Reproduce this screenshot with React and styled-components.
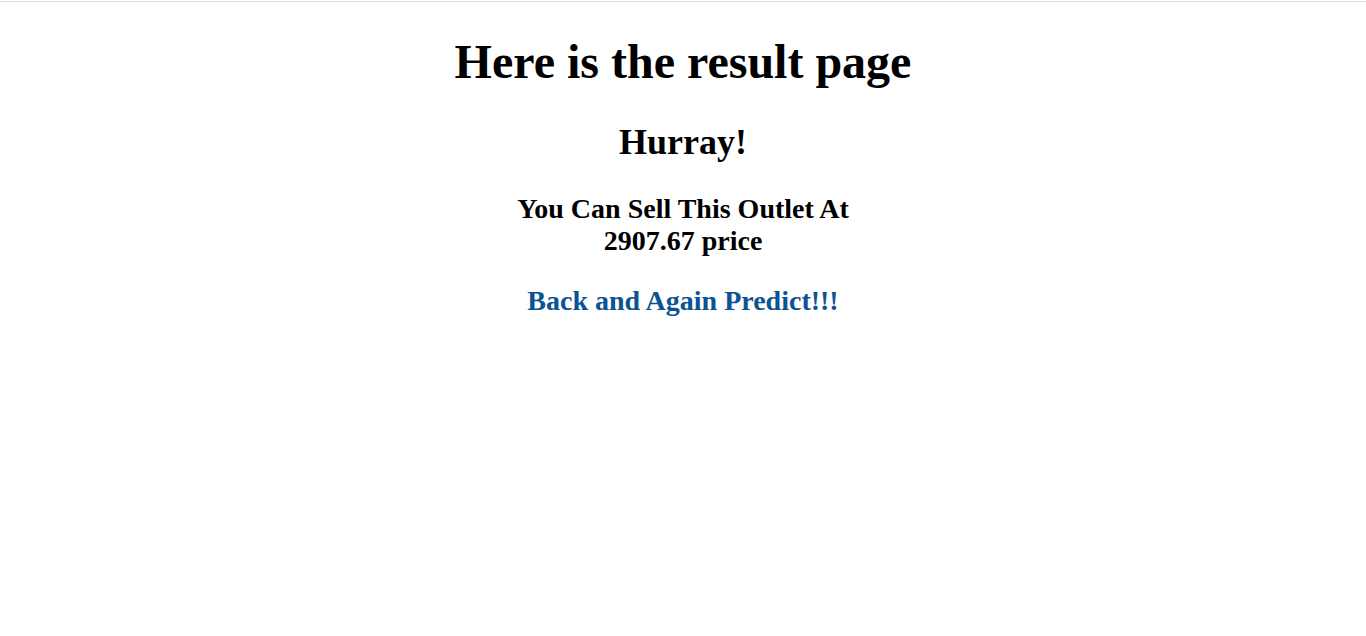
import styled, { createGlobalStyle } from "styled-components";

const GlobalStyle = createGlobalStyle`
  html, body {
    margin: 0;
    background: #fff;
  }
  body {
    font-family: "Liberation Serif", "Times New Roman", serif;
    color: #000;
  }
`;

const Page = styled.div`
  margin-top: 1px;
  border-top: 1px solid #dcdcdc;
  padding: 0 12px;
  text-align: center;
  min-height: 634px;
  box-sizing: border-box;
  display: flow-root;
`;

const Title = styled.h1`
  font-size: 48px;
  font-weight: bold;
  margin: 32px 0;
`;

const Cheer = styled.h2`
  font-size: 36px;
  font-weight: bold;
  margin: 30px 0;
`;

const Result = styled.h3`
  font-size: 28px;
  font-weight: bold;
  margin: 28px 0;
`;

const BackLink = styled.a`
  color: #0b5394;
  text-decoration: none;
`;

const App = () => {
  return (
    <>
      <GlobalStyle />
      <Page>
        <Title>Here is the result page</Title>
        <Cheer>Hurray!</Cheer>
        <Result>
          You Can Sell This Outlet At
          <br />
          2907.67 price
        </Result>
        <Result>
          <BackLink href="#">Back and Again Predict!!!</BackLink>
        </Result>
      </Page>
    </>
  );
};

export default App;
